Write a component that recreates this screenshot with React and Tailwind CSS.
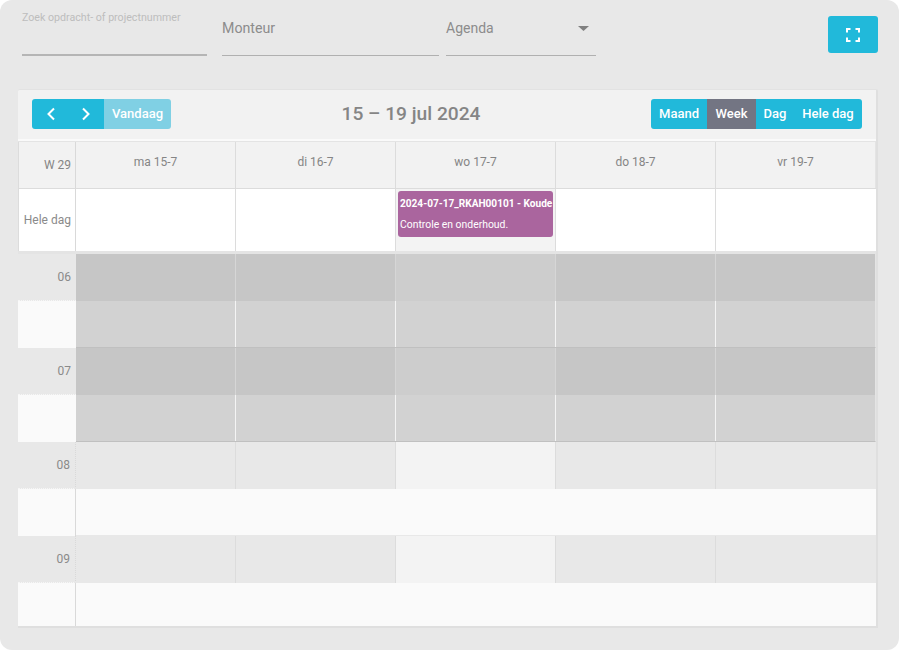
const FONT = "font-['Roboto','Liberation_Sans',sans-serif]";

const days = ["ma 15-7", "di 16-7", "wo 17-7", "do 18-7", "vr 19-7"];
const slots = [
  { label: "06", even: true, dark: true },
  { label: "", even: false, dark: true },
  { label: "07", even: true, dark: true },
  { label: "", even: false, dark: true },
  { label: "08", even: true, dark: false },
  { label: "", even: false, dark: false },
  { label: "09", even: true, dark: false },
  { label: "", even: false, dark: false, last: true },
];

function Slot({ label, even, dark, last }) {
  const h = last ? "h-[43px]" : "h-[47px]";
  const timeBorder = dark ? "" : "border-r border-[#d9d9d9]";
  const timeBg = even ? "bg-[#e8e8e8] border-b border-dotted border-b-[#f6f6f6]" : "bg-[#fafafa]";
  return (
    <div className={`flex ${h}`}>
      <div className={`w-[58px] shrink-0 flex items-center justify-end pr-[5px] text-[12px] text-[#8a8a8a] ${timeBorder} ${timeBg}`}>
        {label}
      </div>
      {dark ? (
        <div className={`flex-1 flex border-r border-r-[#e4e4e4] ${even ? "bg-[#c6c6c6]" : "bg-[#d2d2d2] border-b border-b-[#c0c0c0]"}`}>
          {days.map((d, i) => (
            <div
              key={d}
              className={`${i === 4 ? "flex-1" : "w-[160px] border-r"} ${even ? "border-[#d6d6d6]" : "border-[#f4f4f4]"} ${i === 2 && even ? "bg-[#cdcdcd]" : ""}`}
            />
          ))}
        </div>
      ) : even ? (
        <div className="flex-1 flex">
          {days.map((d, i) => (
            <div
              key={d}
              className={`${i === 4 ? "flex-1" : "w-[160px] border-r border-[#dcdcdc]"} ${i === 2 ? "bg-[#f3f3f3]" : "bg-[#e8e8e8]"}`}
            />
          ))}
        </div>
      ) : (
        <div className={`flex-1 bg-[#fafafa] ${last ? "" : "border-b border-[#e8e8e8]"}`} />
      )}
    </div>
  );
}

export default function App() {
  return (
    <div className={`w-[899px] h-[650px] overflow-hidden bg-white antialiased ${FONT}`}>
      <div className="w-[899px] h-[650px] rounded-[12px] bg-[#e8e8e8] flex flex-col">
        <div className="h-[89px] shrink-0 flex items-start pl-[22px] pr-[21px]">
          <div className="w-[185px] mr-[15px] h-[56px] border-b-2 border-[#b5b5b5] pt-[12px]">
            <span className="text-[10.65px] leading-[12px] text-[#bdbdbd] block">Zoek opdracht- of projectnummer</span>
          </div>
          <div className="w-[217px] mr-[7px] h-[56px] border-b border-[#b0b0b0] pt-[20px]">
            <span className="text-[14.2px] leading-[17px] text-[#8c8c8c] block">Monteur</span>
          </div>
          <div className="w-[150px] h-[56px] border-b border-[#b0b0b0] pt-[20px] flex justify-between pr-[7px]">
            <span className="text-[14px] leading-[17px] text-[#8c8c8c] block">Agenda</span>
            <svg width="11" height="5" viewBox="0 0 11 5" className="mt-[6px]"><path d="M0 0h11L5.5 5z" fill="#808080" /></svg>
          </div>
          <button className="ml-auto mt-[16px] w-[50px] h-[37px] rounded-[3px] bg-[#21b9da] flex items-center justify-center">
            <svg width="14" height="14" viewBox="0 0 14 14" fill="none" stroke="#fff" strokeWidth="2">
              <path d="M1 4.5V1h3.5M9.5 1H13v3.5M13 9.5V13H9.5M4.5 13H1V9.5" />
            </svg>
          </button>
        </div>

        <div className="ml-[18px] w-[860px] h-[539px] shrink-0 bg-[#f2f2f2] border-t border-[#e2e2e2] border-r-2 border-b-2 border-r-[#dfdfdf] border-b-[#dfdfdf] rounded-t-[2px] flex flex-col">
          <div className="h-[49px] shrink-0 flex items-center justify-between px-[14px] pb-px">
            <div className="flex h-[30px] rounded-[3px] overflow-hidden text-white text-[13px] font-medium">
              <button className="w-[36px] bg-[#21b9da] flex items-center justify-center">
                <svg width="10" height="14" viewBox="0 0 10 14" fill="none" stroke="#fff" strokeWidth="2" className="ml-px"><path d="M8 1.5 2.5 7 8 12.5" /></svg>
              </button>
              <button className="w-[36px] bg-[#21b9da] flex items-center justify-center">
                <svg width="10" height="14" viewBox="0 0 10 14" fill="none" stroke="#fff" strokeWidth="2"><path d="M2 1.5 7.5 7 2 12.5" /></svg>
              </button>
              <button className="w-[67px] bg-[#80d0e4]">Vandaag</button>
            </div>
            <div className="text-[19.2px] font-medium text-[#858585]">15 – 19 jul 2024</div>
            <div className="flex h-[30px] rounded-[3px] overflow-hidden text-white text-[13px] font-medium bg-[#21b9da]">
              <button className="w-[56px]">Maand</button>
              <button className="w-[49px] bg-[#737583]">Week</button>
              <button className="w-[38px]">Dag</button>
              <button className="w-[68px]">Hele dag</button>
            </div>
          </div>
          <div className="flex-1 min-h-0 border-t-2 border-[#fafafa] flex flex-col">
            <div className="flex h-[48px] shrink-0 border-b border-[#dcdcdc] border-t border-t-[#e4e4e4] text-[12px] text-[#858585]">
              <div className="w-[58px] shrink-0 border-r border-[#d9d9d9] border-l border-l-[#dcdcdc] flex items-center justify-end pr-[4px]">W 29</div>
              {days.map((d, i) => (
                <div key={d} className={`${i === 4 ? "flex-1 border-r border-[#e4e4e4]" : "w-[160px] border-r border-[#dcdcdc]"} pt-[11px] text-center`}>{d}</div>
              ))}
            </div>
            <div className="flex h-[62px] shrink-0 bg-white">
              <div className="w-[58px] shrink-0 border-r border-[#d9d9d9] border-l border-l-[#dcdcdc] flex items-center justify-end pr-[4px] text-[12px] text-[#8a8a8a]">Hele dag</div>
              {days.map((d, i) => (
                <div key={d} className={`${i === 4 ? "flex-1" : "w-[160px] border-r border-[#dcdcdc]"} ${i === 2 ? "bg-[#f3f3f3] pl-[2px] pt-[2px]" : ""}`}>
                  {i === 2 && (
                    <div className="w-[155px] h-[46px] rounded-[3px] bg-[#aa659e] text-white pl-[2px] overflow-hidden whitespace-nowrap">
                      <div className="text-[10.1px] font-bold leading-[12px] mt-[7px]">2024-07-17_RKAH00101 - Koude</div>
                      <div className="text-[10.4px] leading-[12px] mt-[9px]">Controle en onderhoud.</div>
                    </div>
                  )}
                </div>
              ))}
            </div>
            <div className="h-[3px] bg-[#e4e4e4] shrink-0" />
            <div className="flex-1 flex flex-col">
              {slots.map((s, i) => <Slot key={i} {...s} />)}
            </div>
          </div>
        </div>
      </div>
    </div>
  );
}
